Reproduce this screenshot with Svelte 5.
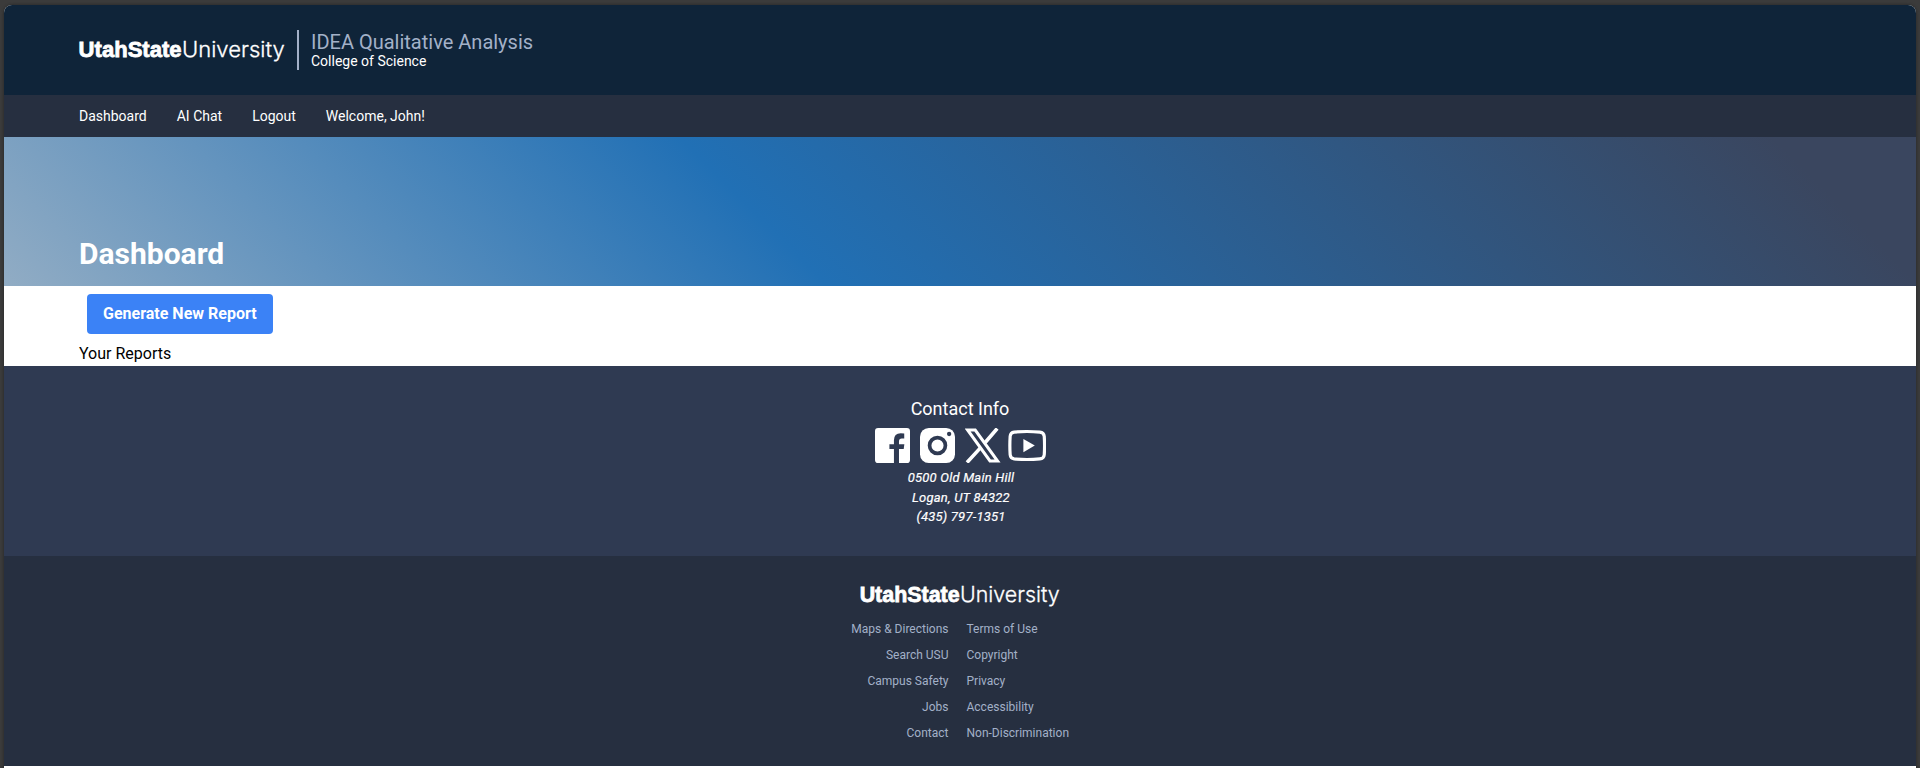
<script>
  const nav = ['Dashboard', 'AI Chat', 'Logout', 'Welcome, John!'];
  const left = ['Maps & Directions', 'Search USU', 'Campus Safety', 'Jobs', 'Contact'];
  const right = ['Terms of Use', 'Copyright', 'Privacy', 'Accessibility', 'Non-Discrimination'];
</script>

{#snippet wordmark(width)}
  <svg class="wordmark" width={width} viewBox="0 0 206 26" role="img" aria-label="Utah State University">
    <text class="heavy" x="-0.4" y="20.2" textLength="103" lengthAdjust="spacingAndGlyphs">UtahState</text>
    <text class="thin" x="103" y="20.2" textLength="102.8" lengthAdjust="spacingAndGlyphs">University</text>
  </svg>
{/snippet}

<div class="frame">
  <div class="page">
    <header>
      {@render wordmark(206)}
      <div class="title">
        <span class="app">IDEA Qualitative Analysis</span>
        <span class="college">College of Science</span>
      </div>
    </header>
    <nav>
      {#each nav as item}<span>{item}</span>{/each}
    </nav>
    <div class="banner"><h1>Dashboard</h1></div>
    <main>
      <button>Generate New Report</button>
      <div class="reports">Your Reports</div>
    </main>
    <section class="contact">
      <h2>Contact Info</h2>
      <div class="icons">
        <svg width="35" height="35" viewBox="0 0 34 34">
          <path fill="#fff" d="M3 0H31Q34 0 34 3V31Q34 34 31 34H23.3V20.5H27.9L28.5 15.8H23.3V13Q23.3 10.3 26 10.3H28.4V5.4Q26.8 5.1 25 5.1Q18.4 5.1 18.4 12V15.8H14V20.5H18.4V34H3Q0 34 0 31V3Q0 0 3 0Z" />
        </svg>
        <svg width="35" height="35" viewBox="0 0 34 34">
          <rect width="34" height="34" rx="8.5" fill="#fff" />
          <circle cx="17" cy="17" r="7.7" fill="none" stroke="#2f3a52" stroke-width="3.6" />
          <circle cx="28.3" cy="5.8" r="2.1" fill="#2f3a52" />
        </svg>
        <svg width="36" height="35" viewBox="0 0 36 34">
          <path fill="none" stroke="#fff" stroke-width="3" d="M2.6 1.5H10.2L32.6 32.5H25Z" />
          <path stroke="#fff" stroke-width="3.6" d="M32.2 0L20.2 14M15.4 19.4L2 34" />
        </svg>
        <svg width="38" height="35" viewBox="0 0 37 34">
          <path fill="none" stroke="#fff" stroke-width="3.1" d="M6 3.9Q18.5 2.9 31 3.9Q35 4.3 35.3 8Q35.9 17 35.3 26Q35 29.7 31 30.1Q18.5 31.1 6 30.1Q2.4 29.7 2.1 26Q1.5 17 2.1 8Q2.4 4.3 6 3.9Z" />
          <path fill="#fff" d="M15 10.7L26.1 17L15 23.6Z" />
        </svg>
      </div>
      <address>0500 Old Main Hill<br />Logan, UT 84322<br />(435) 797-1351</address>
    </section>
    <footer>
      {@render wordmark(200)}
      <div class="links">
        <ul class="left">{#each left as l}<li>{l}</li>{/each}</ul>
        <ul>{#each right as l}<li>{l}</li>{/each}</ul>
      </div>
    </footer>
  </div>
</div>

<style>
  :global(body) { margin: 0; background: #3b3b3b; overflow: hidden; }
  .frame { box-sizing: border-box; height: 768px; padding: 5px 4px 0; font-family: Roboto, sans-serif; overflow: hidden; }
  .page { height: 763px; background: #fff; border-radius: 8px 8px 0 0; overflow: hidden; box-shadow: 0 0 3px #222; }
  .wordmark { display: block; fill: #fff; overflow: visible; }
  .heavy { font: 700 22.3px "Liberation Sans", Arial, sans-serif; stroke: #fff; stroke-width: 0.8px; }
  .thin { font: 300 22px Inter, sans-serif; stroke: #fff; stroke-width: 0.3px; }
  header { box-sizing: border-box; height: 90px; padding: 0 75px; background: #0f2439; display: flex; align-items: center; }
  .title { box-sizing: border-box; height: 40px; margin-left: 12px; padding: 2px 0 0 12px; border-left: 2px solid #a3b1c8; display: flex; flex-direction: column; }
  .app { font-size: 20px; line-height: 20px; color: #a3b1c8; }
  .college { font-size: 14px; line-height: 18px; color: #fff; }
  nav { height: 42px; padding: 0 75px; background: #262f40; display: flex; align-items: center; gap: 30px; color: #fff; font-size: 14px; }
  .banner { box-sizing: border-box; height: 149px; padding: 0 75px 10px; display: flex; align-items: flex-end; background: linear-gradient(45deg, #91acc4 0%, #2170b5 40%, #3a465f 93%); }
  h1 { margin: 0; color: #fff; font-size: 30px; line-height: 45px; font-weight: 700; }
  main { box-sizing: border-box; height: 80px; padding: 8px 75px 0; background: #fff; }
  button { display: block; margin: 0 0 8px 8px; height: 40px; padding: 0 16px; border: 0; border-radius: 4px; background: #3b82f6; color: #fff; font: 700 16px/40px Roboto, sans-serif; }
  .reports { font-size: 16px; line-height: 24px; color: #000; }
  .contact { box-sizing: border-box; height: 190px; padding-top: 29px; background: #2f3a52; color: #fff; display: flex; flex-direction: column; align-items: center; }
  h2 { margin: 0; font-size: 18px; line-height: 27px; font-weight: 400; }
  .icons { display: flex; gap: 10px; margin-top: 6px; padding-left: 1px; }
  .icons svg { display: block; }
  .icons svg:last-child { margin-left: -3px; }
  address { margin-top: 5px; font-size: 13px; letter-spacing: 0.21px; -webkit-text-stroke: 0.2px #fff; line-height: 19.5px; text-align: center; padding-left: 2px; }
  footer { box-sizing: border-box; height: 210px; padding-top: 26px; background: #262f40; display: flex; flex-direction: column; align-items: center; }
  .links { display: grid; grid-template-columns: 1fr 1fr; gap: 18px; margin-top: 9px; width: 250px; padding-right: 5px; }
  ul { margin: 0; padding: 0; list-style: none; font-size: 12px; line-height: 26px; color: #a3b1c8; white-space: nowrap; }
  .left { text-align: right; }
</style>
